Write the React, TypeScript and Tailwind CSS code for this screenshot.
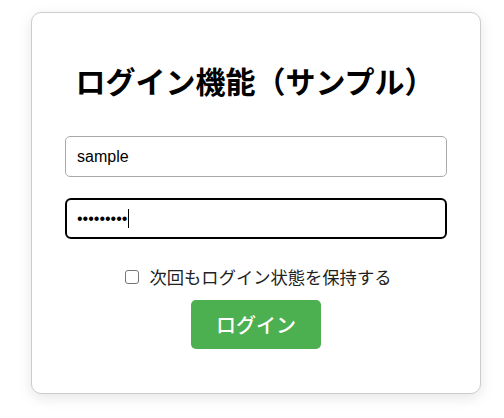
export default function App() {
  return (
    <div className="min-h-[418px] bg-white pl-[31px] pt-[12px] font-['Liberation_Sans','Noto_Sans_CJK_JP',sans-serif]">
      {/* Login card */}
      <div className="w-[450px] h-[382px] rounded-[10px] border border-[#cccccc] bg-white shadow-[0_4px_14px_rgba(0,0,0,0.1)] px-[33px] pt-[46px]">
        <h1 className="text-center text-[30px] font-bold leading-[43px] text-black font-['Noto_Sans_CJK_JP',sans-serif] -translate-x-[1px]">
          ログイン機能（サンプル）
        </h1>

        <div className="mt-[34px] flex flex-col gap-[21px]">
          <input
            type="text"
            defaultValue="sample"
            className="h-[41px] w-full rounded-[5px] border border-[#aaaaaa] px-[11px] text-[16px] text-black outline-none"
          />
          {/* focused password field with caret */}
          <div className="flex h-[41px] w-full items-center rounded-[6px] border-2 border-black px-[10px] text-[16px] text-black">
            <span>•••••••••</span>
            <span className="ml-[1px] h-[19px] w-px bg-black" />
          </div>
        </div>

        <label className="mt-[26px] flex items-center justify-center gap-[11px] text-[17.3px] leading-[24px] text-[#222222] font-['Noto_Sans_CJK_JP',sans-serif] translate-x-[2px]">
          <span className="block h-[14px] w-[14px] shrink-0 rounded-[3px] border border-[#767676] bg-white" />
          <span>次回もログイン状態を保持する</span>
        </label>

        <div className="mt-[11px] flex justify-center">
          <button className="h-[49px] w-[130px] rounded-[5px] bg-[#4caf50] text-[20px] font-medium text-white font-['Noto_Sans_CJK_JP',sans-serif]">
            ログイン
          </button>
        </div>
      </div>
    </div>
  );
}
